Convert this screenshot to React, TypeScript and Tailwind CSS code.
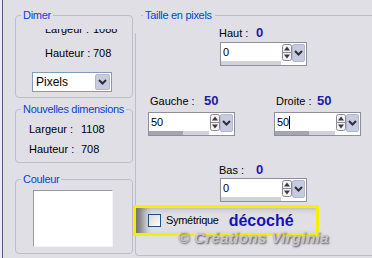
import type { ReactNode } from "react";

function Group({ title, className, children }: { title: string; className: string; children: ReactNode }) {
  return (
    <fieldset className={`rounded-[4px] border border-[#bfbec8] ${className}`}>
      <legend className="ml-[5px] px-[2px] text-[11px] leading-[14px] tracking-[-0.3px] text-[#0046d5]">{title}</legend>
      {children}
    </fieldset>
  );
}

function Chevron() {
  return (
    <svg width="9" height="6" viewBox="0 0 9 6">
      <path d="M1 1 L4.5 4.5 L8 1" fill="none" stroke="#2e2e3a" strokeWidth="2" />
    </svg>
  );
}

function SpinArrows() {
  return (
    <svg width="10" height="17" viewBox="0 0 10 17">
      <rect x="0.5" y="0.5" width="9" height="16" rx="2" fill="#f2f2f5" stroke="#8a8a96" />
      <line x1="1" y1="8.5" x2="9" y2="8.5" stroke="#8a8a96" />
      <path d="M5 2.5 L8 6.5 H2 Z" fill="#3a3a3a" />
      <path d="M5 14.5 L8 10.5 H2 Z" fill="#3a3a3a" />
    </svg>
  );
}

function Spin({ value, fill, caret }: { value: string; fill: number; caret?: boolean }) {
  return (
    <div className="flex h-[24px] w-[87px] border border-[#8f8f9c] bg-white">
      <div className="flex flex-1 flex-col">
        <div className="flex h-[18px] items-center pl-[2px] text-[11px]">
          {value}
          {caret && <span className="h-[13px] w-[1px] bg-black" />}
        </div>
        <div className="flex h-[4px] bg-[#d2d2da]">
          <div className="h-full bg-[#a6a6b0]" style={{ width: `${fill}%` }} />
        </div>
      </div>
      <div className="flex w-[11px] items-start justify-center pt-[1px]">
        <SpinArrows />
      </div>
      <div className="my-[1px] mr-[1px] flex h-[18px] w-[13px] items-center justify-center rounded-[2px] border border-[#b2b8cf] bg-[#c7cbe0]">
        <Chevron />
      </div>
    </div>
  );
}

function Value({ children }: { children: ReactNode }) {
  return <span className="text-[13px] font-bold text-[#1c1ca8]">{children}</span>;
}

export default function App() {
  return (
    <div className="relative flex h-[258px] w-[372px] overflow-hidden bg-[#e0dfe6] font-['Liberation_Sans',Arial,sans-serif] text-[11px] text-black">
      <div className="w-[2px] bg-[#ececf2]" />
      <div className="w-[1px] bg-[#545478]" />

      {/* left column */}
      <div className="ml-[12px] flex w-[118px] flex-col">
        <Group title="Dimer" className="mt-[8px] pb-[5px]">
          <div className="mt-[7px] h-[7px] overflow-hidden">
            <div className="-mt-[6px] grid grid-cols-[48px_auto] pl-[29px] leading-[13px]">
              <span>Largeur :</span>
              <span>1088</span>
            </div>
          </div>
          <div className="mt-[11px] grid grid-cols-[48px_auto] pl-[29px] leading-[13px]">
            <span>Hauteur :</span>
            <span>708</span>
          </div>
          <div className="ml-[16px] mt-[12px] flex h-[20px] w-[80px] items-center border border-[#7f9db9] bg-white">
            <span className="flex-1 pl-[3px] text-[12px]">Pixels</span>
            <div className="mr-[1px] flex h-[16px] w-[15px] items-center justify-center rounded-[2px] border border-[#b2b8cf] bg-[#c7cbe0]">
              <Chevron />
            </div>
          </div>
        </Group>

        <Group title="Nouvelles dimensions" className="mt-[4px] pb-[6px]">
          <div className="mt-[7px] grid grid-cols-[52px_auto] pl-[13px] leading-[13px]">
            <span>Largeur :</span>
            <span>1108</span>
          </div>
          <div className="mt-[7px] grid grid-cols-[52px_auto] pl-[13px] leading-[13px]">
            <span>Hauteur :</span>
            <span>708</span>
          </div>
        </Group>

        <Group title="Couleur" className="mt-[9px] pb-[6px]">
          <div className="ml-[17px] mt-[4px] h-[57px] w-[80px] border border-t-[#9a9aa2] border-l-[#9a9aa2] border-r-[#f4f4f6] border-b-[#f4f4f6] bg-white" />
        </Group>
      </div>

      {/* right column */}
      <div className="flex flex-1 flex-col">
        <div className="mt-[8px] flex h-[14px] items-center">
          <div className="ml-[8px] h-[1px] w-[2px] bg-[#bfbec8]" />
          <span className="ml-[2px] tracking-[-0.3px] text-[#0046d5]">Taille en pixels</span>
          <div className="ml-[3px] h-[1px] flex-1 bg-[#bfbec8]" />
        </div>

        <div className="mb-[2px] ml-[2px] mt-[11px] flex flex-1 flex-col rounded-bl-[4px] border-b border-l border-[#bfbec8]">
          <div className="-mt-[10px] ml-[83px] flex h-[14px] items-baseline">
            <span className="w-[37px]">Haut :</span>
            <Value>0</Value>
          </div>
          <div className="ml-[84px] mt-[5px]">
            <Spin value="0" fill={0} />
          </div>

          <div className="ml-[14px] mt-[25px] flex h-[14px] items-baseline">
            <div className="flex w-[126px] items-baseline">
              <span className="w-[54px]">Gauche :</span>
              <Value>50</Value>
            </div>
            <span className="w-[41px]">Droite :</span>
            <Value>50</Value>
          </div>
          <div className="ml-[12px] mt-[7px] flex gap-[39px]">
            <Spin value="50" fill={57} />
            <Spin value="50" fill={56} caret />
          </div>

          <div className="ml-[83px] mt-[24px] flex h-[14px] items-baseline">
            <span className="w-[37px]">Bas :</span>
            <Value>0</Value>
          </div>
          <div className="ml-[84px] mt-[4px]">
            <Spin value="0" fill={0} />
          </div>

          <div className="relative z-10 -ml-[3px] mt-[3px] flex h-[31px] w-[186px] items-center border-[3px] border-[#f2f200] bg-[#e0dfe6] pl-[12px] shadow-[inset_12px_2px_10px_-5px_rgba(0,0,0,0.5)]">
            <div className="h-[13px] w-[13px] border border-[#1c5180] bg-linear-to-br from-[#d8d8d4] to-white" />
            <span className="ml-[5px] tracking-[-0.3px]">Symétrique</span>
            <span className="ml-[10px] text-[16px] font-bold text-[#1414b8]">décoché</span>
          </div>
        </div>
      </div>

      <div className="absolute left-[178px] top-[229px] z-20 text-[15px] font-bold italic leading-[18px] tracking-[0.4px] text-[#c6c6cc] [text-shadow:1px_1px_2px_rgba(0,0,0,0.65)]">
        © Créations Virginia
      </div>
    </div>
  );
}
